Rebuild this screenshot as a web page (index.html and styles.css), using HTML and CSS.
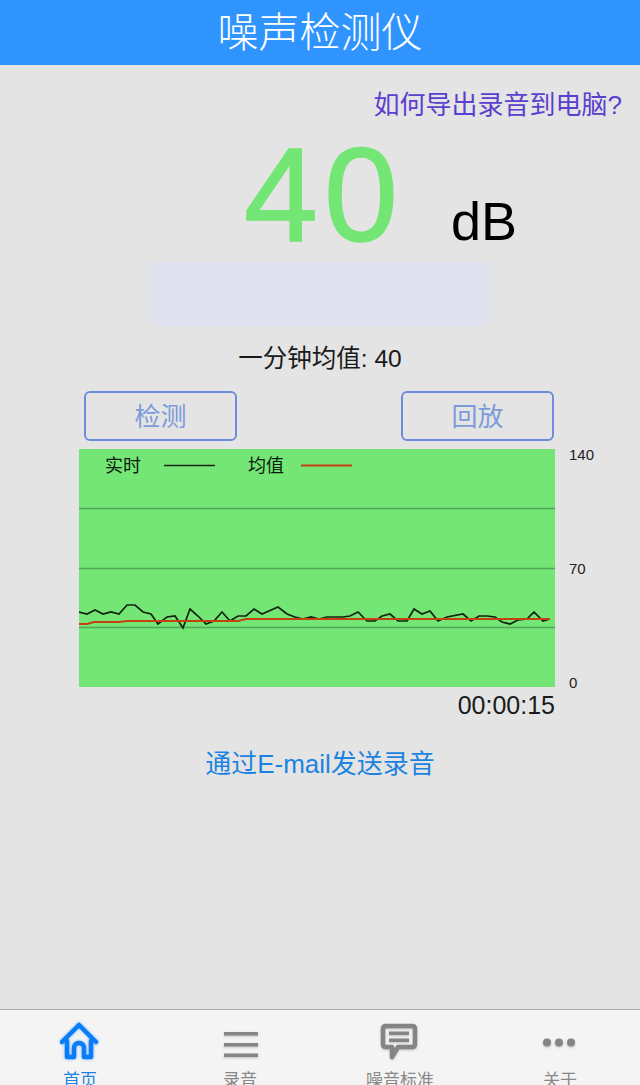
FILE: index.html
```html
<!DOCTYPE html>
<html>
	<head>
		<meta charset="utf-8" />
		<title>噪声检测仪</title>
		<link rel="stylesheet" href="styles.css">
	</head>
	<body>
		<div class="app">
			<div class="header">噪声检测仪</div>
			<div class="main">
				<div class="help">如何导出录音到电脑?</div>
				<div class="reading">
					<div class="value">40</div>
					<div class="unit">dB</div>
				</div>
				<div class="level"></div>
				<div class="avg">一分钟均值: 40</div>
				<div class="btns">
					<div class="btn">检测</div>
					<div class="btn">回放</div>
				</div>
				<div class="chartRow">
					<svg class="chart" width="476" height="238" viewBox="79 449 476 238">
						<line class="grid" x1="79" y1="508.5" x2="555" y2="508.5" />
						<line class="grid" x1="79" y1="568.5" x2="555" y2="568.5" />
						<line class="grid" x1="79" y1="627.5" x2="555" y2="627.5" />
						<text class="legend" x="105" y="472">实时</text>
						<line class="live" x1="164" y1="465.5" x2="215" y2="465.5" />
						<text class="legend" x="248" y="472">均值</text>
						<line class="mean" x1="301" y1="465.5" x2="352" y2="465.5" />
						<polyline class="live" points="79,612 87,614 95,610 103,614 111,612 119,614 127,605 135,605 143,612 151,614 158,624 167,617 175,616 183,628 190,609 198,616 206,624 214,621 222,612 230,621 238,616 246,616 254,609 262,614 278,607 287,614 295,617 303,619 311,617 319,619 327,617 343,617 350,616 358,612 367,621 375,621 382,616 390,614 398,621 407,621 414,609 422,614 430,611 438,621 447,617 463,614 471,621 479,616 487,616 495,617 502,622 510,624 518,620 527,619 534,612 543,621 550,619" />
						<polyline class="mean" points="79,624 87,624 94,622 119,622 127,621 238,621 246,619 550,619" />
					</svg>
					<div class="axis">
						<span>140</span>
						<span>70</span>
						<span>0</span>
					</div>
				</div>
				<div class="time">00:00:15</div>
				<div class="mail">通过E-mail发送录音</div>
			</div>
			<div class="tabs">
				<div class="tab on">
					<svg class="icon" width="40" height="40" viewBox="1 0 40 40">
						<path class="homeLine" d="M3 21 L20 4 L37 21" />
						<path class="homeLine" d="M8 20 V36 H15 V27 a5 5 0 0 1 10 0 V36 H32 V20" />
					</svg>
					<div class="tabName">首页</div>
				</div>
				<div class="tab">
					<svg class="icon" width="40" height="40" viewBox="-1 0 40 40">
						<rect class="grey" x="3" y="11" width="34" height="3.5" />
						<rect class="grey" x="3" y="22" width="34" height="3.5" />
						<rect class="grey" x="3" y="32.5" width="34" height="3.5" />
					</svg>
					<div class="tabName">录音</div>
				</div>
				<div class="tab">
					<svg class="icon" width="40" height="40" viewBox="1 0 40 40">
						<path class="bubble" d="M7 5 H33 Q36 5 36 8 V23 Q36 26 33 26 H19 L13 36 V26 H7 Q4 26 4 23 V8 Q4 5 7 5 Z" />
						<rect class="grey" x="10" y="10.5" width="20" height="3.5" />
						<rect class="grey" x="10" y="17.5" width="20" height="3.5" />
					</svg>
					<div class="tabName">噪音标准</div>
				</div>
				<div class="tab">
					<svg class="icon" width="40" height="40" viewBox="0 0 40 40">
						<circle class="grey" cx="7" cy="21.5" r="4" />
						<circle class="grey" cx="19" cy="21.5" r="4" />
						<circle class="grey" cx="31" cy="21.5" r="4" />
					</svg>
					<div class="tabName">关于</div>
				</div>
			</div>
		</div>
	</body>
</html>
```

FILE: styles.css
```css
html,body{
	margin: 0;
	padding: 0;
}
body{
	font-family: "Liberation Sans","Noto Sans CJK SC",sans-serif;
	background: #e4e4e4;
	overflow: hidden;
}
.app{
	width: 640px;
	height: 1085px;
	display: flex;
	flex-direction: column;
	overflow: hidden;
}
.header{
	height: 65px;
	background: #3094ff;
	color: white;
	font-size: 41px;
	font-weight: 300;
	line-height: 66px;
	text-align: center;
	flex: none;
}
.main{
	flex: 1;
}
.help{
	margin-top: 25px;
	padding-right: 18px;
	font-size: 26px;
	line-height: 30px;
	text-align: right;
	color: #5a3fd0;
}
.reading{
	display: flex;
	align-items: flex-end;
	margin-top: 8px;
	padding-left: 244px;
	gap: 47px;
}
.value{
	font-size: 133px;
	line-height: 134px;
	letter-spacing: 6px;
	-webkit-text-stroke: 1.5px #73e675;
	color: #73e675;
}
.unit{
	font-size: 54px;
	line-height: 82px;
	color: black;
}
.level{
	width: 336px;
	height: 64px;
	margin-left: 152px;
	background: #dfe2ee;
}
.avg{
	margin-top: 18px;
	font-size: 24.5px;
	line-height: 30px;
	text-align: center;
	color: #1a1a1a;
}
.btns{
	display: flex;
	justify-content: space-between;
	margin-top: 17px;
	padding: 0 86px 0 84px;
}
.btn{
	box-sizing: border-box;
	width: 153px;
	height: 50px;
	border: 2px solid #6f8cdc;
	border-radius: 6px;
	font-size: 26px;
	line-height: 48px;
	text-align: center;
	color: #7d9adb;
}
.chartRow{
	display: flex;
	margin-top: 8px;
	padding-left: 79px;
}
.chart{
	display: block;
	background: #73e675;
	flex: none;
}
.grid{
	stroke: #55a65a;
	stroke-width: 1.5;
}
.legend{
	font-size: 18px;
	fill: #0c1a0c;
}
.live{
	fill: none;
	stroke: #10240f;
	stroke-width: 1.7;
}
.mean{
	fill: none;
	stroke: #c4420f;
	stroke-width: 2;
}
.axis{
	display: flex;
	flex-direction: column;
	justify-content: space-between;
	height: 240px;
	margin-left: 14px;
	font-size: 15px;
	line-height: 12px;
	color: #222;
}
.time{
	margin-top: 1px;
	padding-right: 85px;
	font-size: 25px;
	line-height: 30px;
	text-align: right;
	color: #1a1a1a;
}
.mail{
	margin-top: 29px;
	font-size: 26px;
	line-height: 30px;
	text-align: center;
	color: #1c84e0;
}
.tabs{
	display: grid;
	grid-template-columns: repeat(4,160px);
	flex: none;
	height: 75px;
	border-top: 1px solid #aaa;
	background: #f4f4f4;
	overflow: hidden;
}
.tab{
	display: flex;
	flex-direction: column;
	align-items: center;
	padding-top: 11px;
	color: #888;
}
.tab.on{
	color: #1c84e0;
}
.icon{
	display: block;
	flex: none;
	filter: drop-shadow(0 1px 1px #c0c0c0);
}
.tab.on .icon{
	filter: drop-shadow(0 0 1.5px #6db2ff);
}
.tabName{
	margin-top: 10px;
	font-size: 17px;
	line-height: 20px;
}
.homeLine{
	fill: none;
	stroke: #0a7cf5;
	stroke-width: 4.5;
	stroke-linecap: round;
	stroke-linejoin: round;
}
.grey{
	fill: #858585;
}
.bubble{
	fill: none;
	stroke: #858585;
	stroke-width: 4.5;
	stroke-linejoin: round;
}
```
